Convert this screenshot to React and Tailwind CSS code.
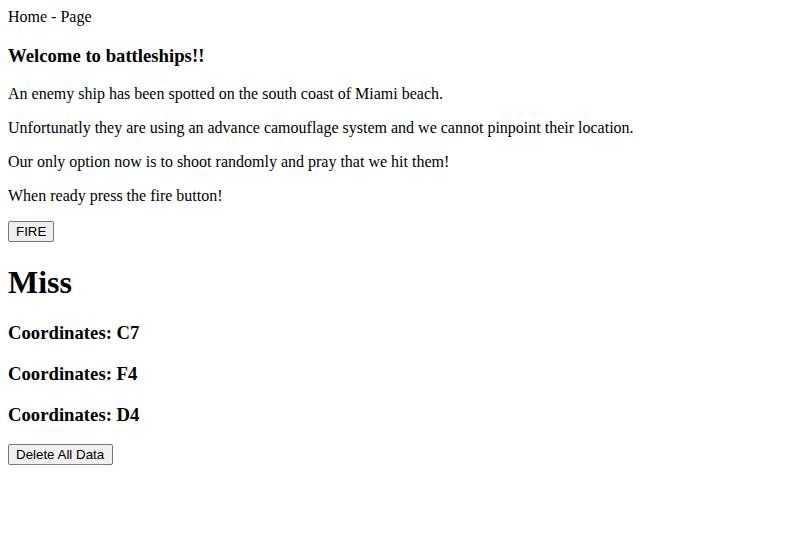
export default function App() {
  const coords = ["C7", "F4", "D4"];
  const btn =
    "block font-['Liberation_Sans',Arial,sans-serif] text-[13.33px] leading-[normal] text-black bg-[#efefef] border border-[#767676] rounded-[2px] pl-[7px] py-[2px] hover:bg-[#e5e5e5]";
  return (
    <div className="min-h-[536px] bg-white p-2 font-['Liberation_Serif','Times_New_Roman',serif] text-base leading-[normal] text-black">
      <div>Home - Page</div>
      <h3 className="my-[18.72px] text-[18.72px] font-bold">Welcome to battleships!!</h3>
      <p className="my-4">An enemy ship has been spotted on the south coast of Miami beach.</p>
      <p className="my-4">
        Unfortunatly they are using an advance camouflage system and we cannot pinpoint their location.
      </p>
      <p className="my-4">Our only option now is to shoot randomly and pray that we hit them!</p>
      <p className="my-4">When ready press the fire button!</p>
      <button className={btn + " pr-[7px]"}>FIRE</button>
      <h1 className="my-[21.44px] text-[32px] font-bold">Miss</h1>
      {coords.map((c) => (
        <h3 key={c} className="my-[18.72px] text-[18.72px] font-bold">
          Coordinates: {c}
        </h3>
      ))}
      <button className={btn + " pr-[8px]"}>Delete All Data</button>
    </div>
  );
}
